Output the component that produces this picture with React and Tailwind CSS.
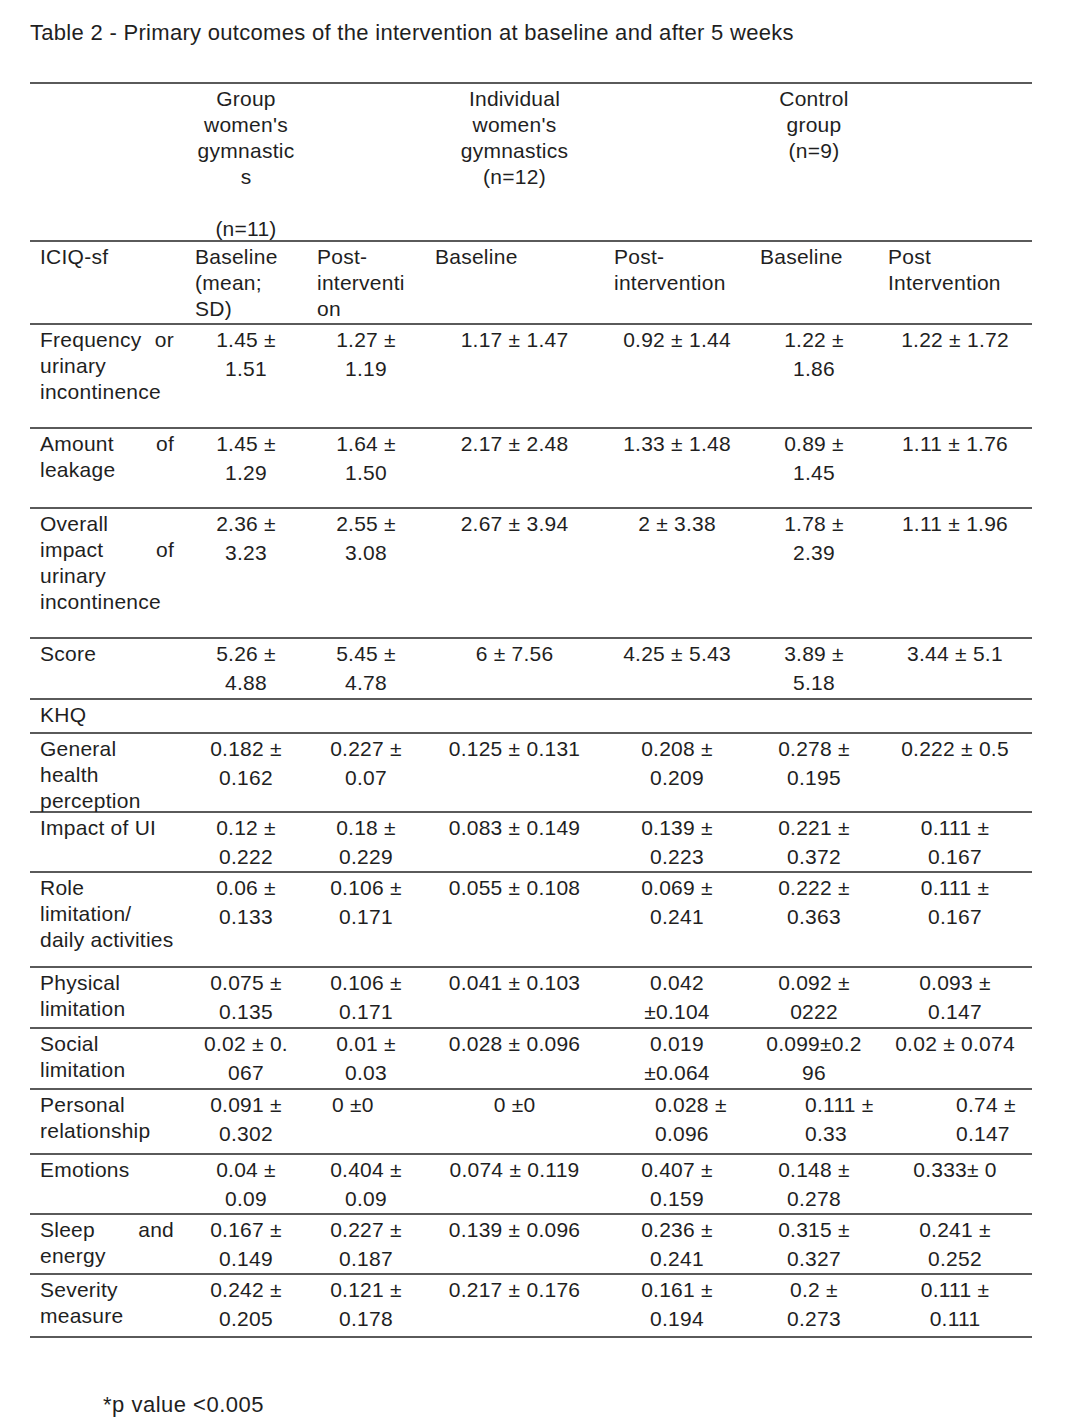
import React from "react";

const cols = "grid grid-cols-[155px_122px_118px_179px_146px_128px_154px]";

const rows = [
  {
    h: "h-[104px]",
    label: "Frequency or urinary incontinence",
    cells: [["1.45 ±", "1.51"], ["1.27 ±", "1.19"], ["1.17 ± 1.47"], ["0.92 ± 1.44"], ["1.22 ±", "1.86"], ["1.22 ± 1.72"]],
  },
  {
    h: "h-[80px]",
    label: "Amount of leakage",
    cells: [["1.45 ±", "1.29"], ["1.64 ±", "1.50"], ["2.17 ± 2.48"], ["1.33 ± 1.48"], ["0.89 ±", "1.45"], ["1.11 ± 1.76"]],
  },
  {
    h: "h-[130px]",
    label: "Overall impact of urinary incontinence",
    cells: [["2.36 ±", "3.23"], ["2.55 ±", "3.08"], ["2.67 ± 3.94"], ["2 ± 3.38"], ["1.78 ±", "2.39"], ["1.11 ± 1.96"]],
  },
  {
    h: "h-[61px]",
    label: "Score",
    cells: [["5.26 ±", "4.88"], ["5.45 ±", "4.78"], ["6 ± 7.56"], ["4.25 ± 5.43"], ["3.89 ±", "5.18"], ["3.44 ± 5.1"]],
  },
  { h: "h-[34px]", label: "KHQ", section: true },
  {
    h: "h-[79px]",
    label: "General health perception",
    cells: [["0.182 ±", "0.162"], ["0.227 ±", "0.07"], ["0.125 ± 0.131"], ["0.208 ±", "0.209"], ["0.278 ±", "0.195"], ["0.222 ± 0.5"]],
  },
  {
    h: "h-[60px]",
    label: "Impact of UI",
    cells: [["0.12 ±", "0.222"], ["0.18 ±", "0.229"], ["0.083 ± 0.149"], ["0.139 ±", "0.223"], ["0.221 ±", "0.372"], ["0.111 ±", "0.167"]],
  },
  {
    h: "h-[95px]",
    label: "Role limitation/ daily activities",
    cells: [["0.06 ±", "0.133"], ["0.106 ±", "0.171"], ["0.055 ± 0.108"], ["0.069 ±", "0.241"], ["0.222 ±", "0.363"], ["0.111 ±", "0.167"]],
  },
  {
    h: "h-[61px]",
    label: "Physical limitation",
    cells: [["0.075 ±", "0.135"], ["0.106 ±", "0.171"], ["0.041 ± 0.103"], ["0.042", "±0.104"], ["0.092 ±", "0222"], ["0.093 ±", "0.147"]],
  },
  {
    h: "h-[61px]",
    label: "Social limitation",
    cells: [["0.02 ± 0.", "067"], ["0.01 ±", "0.03"], ["0.028 ± 0.096"], ["0.019", "±0.064"], ["0.099±0.2", "96"], ["0.02 ± 0.074"]],
  },
  {
    h: "h-[65px]",
    label: "Personal relationship",
    cells: [
      ["0.091 ±", "0.302"],
      { pad: "pl-[25px] text-left", lines: ["0 ±0"] },
      ["0 ±0"],
      { pad: "pl-[51px] text-left", lines: ["0.028 ±", "0.096"] },
      { pad: "pl-[55px] text-left", lines: ["0.111 ±", "0.33"] },
      { pad: "pl-[78px] text-left", lines: ["0.74 ±", "0.147"] },
    ],
  },
  {
    h: "h-[60px]",
    label: "Emotions",
    cells: [["0.04 ±", "0.09"], ["0.404 ±", "0.09"], ["0.074 ± 0.119"], ["0.407 ±", "0.159"], ["0.148 ±", "0.278"], ["0.333± 0"]],
  },
  {
    h: "h-[60px]",
    label: "Sleep and energy",
    cells: [["0.167 ±", "0.149"], ["0.227 ±", "0.187"], ["0.139 ± 0.096"], ["0.236 ±", "0.241"], ["0.315 ±", "0.327"], ["0.241 ±", "0.252"]],
  },
  {
    h: "h-[63px]",
    label: "Severity measure",
    cells: [["0.242 ±", "0.205"], ["0.121 ±", "0.178"], ["0.217 ± 0.176"], ["0.161 ±", "0.194"], ["0.2 ±", "0.273"], ["0.111 ±", "0.111"]],
  },
];

const Lines = ({ lines }) =>
  lines.map((l, i) => (
    <div key={i} className="whitespace-pre">
      {l === "" ? "\u00a0" : l}
    </div>
  ));

const Label = ({ children }) => (
  <div className="pl-[10px] pr-[11px] pt-[2px] leading-[26px] text-justify">{children}</div>
);

const Cell = ({ cell }) => {
  const lines = Array.isArray(cell) ? cell : cell.lines;
  const pad = Array.isArray(cell) ? "text-center" : cell.pad;
  return (
    <div className={`leading-[29px] ${pad}`}>
      <Lines lines={lines} />
    </div>
  );
};

const App = () => {
  return (
    <div className="min-h-[1426px] w-[1080px] bg-white text-[#1f1f1f] font-['Liberation_Sans',Arial,sans-serif] text-[21px] tracking-[0.25px]">
      <div className="pl-[30px] pt-[19px] leading-[28px] text-[22px] tracking-[0.3px]">
        Table 2 - Primary outcomes of the intervention at baseline and after 5 weeks
      </div>

      <div className="ml-[30px] mt-[35px] w-[1002px] border-t-2 border-[#5a5a5a]">
        {/* group header */}
        <div className={`${cols} h-[158px] border-b-2 border-[#5a5a5a] pt-[2px] leading-[26px] text-center`}>
          <div />
          <div>
            <Lines lines={["Group", "women's", "gymnastic", "s", "", "(n=11)"]} />
          </div>
          <div />
          <div>
            <Lines lines={["Individual", "women's", "gymnastics", "(n=12)"]} />
          </div>
          <div />
          <div>
            <Lines lines={["Control", "group", "(n=9)"]} />
          </div>
          <div />
        </div>

        {/* sub header */}
        <div className={`${cols} h-[83px] border-b-2 border-[#5a5a5a] pt-[2px] leading-[26px]`}>
          <div className="pl-[10px]">ICIQ-sf</div>
          <div className="pl-[10px]">
            <Lines lines={["Baseline", "(mean;", "SD)"]} />
          </div>
          <div className="pl-[10px]">
            <Lines lines={["Post-", "interventi", "on"]} />
          </div>
          <div className="pl-[10px]">Baseline</div>
          <div className="pl-[10px]">
            <Lines lines={["Post-", "intervention"]} />
          </div>
          <div className="pl-[10px]">Baseline</div>
          <div className="pl-[10px]">
            <Lines lines={["Post", "Intervention"]} />
          </div>
        </div>

        {rows.map((r) => (
          <div key={r.label} className={`${cols} ${r.h} border-b-2 border-[#5a5a5a]`}>
            <Label>{r.label}</Label>
            {!r.section && r.cells.map((c, i) => <Cell key={i} cell={c} />)}
          </div>
        ))}
      </div>

      <div className="pl-[103px] mt-[53px] leading-[28px] text-[22px] tracking-[0.5px]">*p value &lt;0.005</div>
    </div>
  );
};

export default App;
